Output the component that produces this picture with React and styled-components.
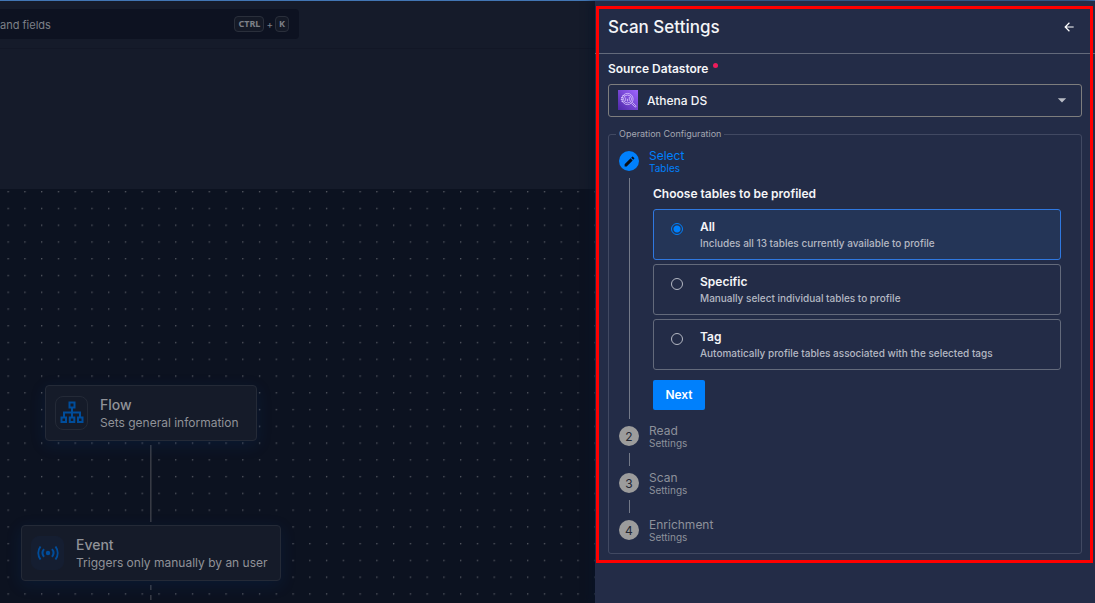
import { useState } from 'react'
import styled, { createGlobalStyle } from 'styled-components'
import { MdArrowBack, MdArrowDropDown, MdEdit } from 'react-icons/md'

const Vars = {
  font: "Inter, 'Noto Sans', sans-serif",
  panel: '#232c47',
  primary: '#0080fc',
  text: '#f4f5f8',
  muted: '#b4b8c3',
  dim: '#8d919b',
  line: '#636a7b',
}

const GlobalStyle = createGlobalStyle`
  * {
    box-sizing: border-box;
  }
  body {
    margin: 0;
    background: #0c1220;
    font-family: ${Vars.font};
  }
  button, input, select {
    font-family: inherit;
  }
`

const Page = styled.div`
  display: grid;
  grid-template-columns: minmax(0, 1fr) 500px;
  min-height: 100vh;
  border-top: 1px solid #4276b4;
`

const Main = styled.main`
  display: flex;
  flex-direction: column;
  min-width: 0;
  overflow: hidden;
  background: #151b2a;
`

const TopBar = styled.header`
  display: flex;
  align-items: center;
  height: 48px;
  padding-bottom: 1px;
  border-bottom: 1px solid #121726;
`

const SearchBox = styled.label`
  display: flex;
  align-items: center;
  width: 299px;
  height: 30px;
  padding-right: 10px;
  border-radius: 0 4px 4px 0;
  background: #0d1221;
  color: #7d8088;
  font-size: 10px;
  input {
    flex: 1;
    min-width: 0;
    padding: 2px 0 0;
    border: 0;
    outline: 0;
    background: transparent;
    color: #7d8088;
    font-size: 11px;
    &::placeholder {
      color: #7d8088;
      opacity: 1;
    }
  }
  kbd {
    padding: 0 3px;
    border: 1px solid #2a2f3b;
    border-radius: 4px;
    background: #141926;
    font: 700 9px/14px 'Noto Sans', sans-serif;
  }
  span {
    padding: 0 2px;
  }
`

const Summary = styled.div`
  height: 140px;
`

const Canvas = styled.section`
  position: relative;
  flex: 1;
  overflow: hidden;
  background: #0c1220;
`

const Backdrop = styled.svg`
  display: block;
  position: absolute;
  inset: 0;
  width: 100%;
  height: 100%;
`

const Node = styled.article`
  display: flex;
  align-items: center;
  gap: 12px;
  position: absolute;
  left: ${(props) => props.$x}px;
  top: ${(props) => props.$y}px;
  width: ${(props) => props.$width}px;
  height: 56px;
  padding: 0 9px;
  border: 1px solid #242a37;
  border-radius: 4px;
  background: #151b29;
  box-shadow: 0 4px 16px rgba(0, 70, 150, 0.16);
  color: #909298;
  h2 {
    margin: 0;
    padding-top: 2px;
    font-size: 14px;
    font-weight: 500;
    line-height: 18px;
  }
  p {
    margin: 0;
    font-size: 12px;
    line-height: 18px;
    white-space: nowrap;
  }
`

const NodeIcon = styled.div`
  display: flex;
  align-items: center;
  justify-content: center;
  flex: none;
  width: 33px;
  height: 34px;
  border: 1px solid ${(props) => (props.$outlined ? '#242a37' : '#151e31')};
  border-radius: 8px;
  background: ${(props) => (props.$outlined ? '#151b29' : '#151e31')};
`

const Panel = styled.aside`
  position: relative;
  z-index: 1;
  background: ${Vars.panel};
  box-shadow: -4px 0 8px rgba(8, 20, 40, 0.7);
`

const Framed = styled.div`
  position: relative;
  &::after {
    content: '';
    position: absolute;
    inset: 5px 2px -9px 1px;
    border: 3px solid #fe0000;
    pointer-events: none;
  }
`

const PanelHeader = styled.header`
  display: flex;
  align-items: center;
  justify-content: space-between;
  height: 53px;
  padding: 0 19px 1px 13px;
  border-bottom: 1px solid ${Vars.line};
  h1 {
    margin: 0;
    color: ${Vars.text};
    font-size: 17px;
    font-weight: 500;
  }
  button {
    display: flex;
    padding: 0;
    border: 0;
    background: none;
    color: #fff;
    cursor: pointer;
  }
`

const Form = styled.form`
  padding: 7px 13px 0;
`

const FieldLabel = styled.label`
  display: flex;
  gap: 5px;
  margin-bottom: 7px;
  color: ${Vars.text};
  font-size: 12px;
  font-weight: 600;
  line-height: 16px;
  &::after {
    content: '';
    width: 5px;
    height: 5px;
    margin-top: 2px;
    border-radius: 50%;
    background: #ed1c5b;
  }
`

const SelectBox = styled.div`
  display: flex;
  align-items: center;
  gap: 9px;
  height: 33px;
  padding: 0 9px 1px;
  border: 1px solid #7d7d7d;
  border-radius: 3px;
  color: #b9bcc5;
  select {
    flex: 1;
    min-width: 0;
    padding: 0;
    border: 0;
    outline: 0;
    appearance: none;
    background: transparent;
    color: ${Vars.text};
    font-size: 12px;
    font-weight: 500;
  }
`

const Group = styled.fieldset`
  min-width: 0;
  margin: 11px 0 0;
  padding: 9px 10px;
  border: 1px solid #414962;
  border-radius: 3px;
  legend {
    margin-left: -3px;
    padding: 0 3px;
    color: #a3a7b2;
    font-size: 9px;
    line-height: 12px;
  }
`

const Steps = styled.ol`
  margin: 0;
  padding: 0;
  list-style: none;
`

const StepItem = styled.li`
  display: flex;
  gap: 10px;
  min-height: ${(props) => (props.$last ? 26 : 47)}px;
`

const Marker = styled.div`
  display: flex;
  flex-direction: column;
  align-items: center;
  gap: 7px;
  flex: none;
  width: 20px;
  padding: ${(props) => (props.$last ? '2px 0 0' : '2px 0 5px')};
  &::after {
    content: '';
    display: ${(props) => (props.$last ? 'none' : 'block')};
    flex: 1;
    width: 1px;
    background: #737988;
  }
`

const Circle = styled.span`
  display: flex;
  align-items: center;
  justify-content: center;
  flex: none;
  width: 20px;
  height: 20px;
  border-radius: 50%;
  background: ${(props) => (props.$active ? Vars.primary : '#9c9c9c')};
  color: ${(props) => (props.$active ? '#0b0f18' : '#232733')};
  font-size: 12px;
`

const StepContent = styled.div`
  flex: 1;
  min-width: 0;
`

const StepTitle = styled.div`
  color: ${(props) => (props.$active ? Vars.primary : Vars.dim)};
  font-size: 12px;
  line-height: 14px;
  small {
    display: block;
    font-size: 10px;
    line-height: 10px;
  }
`

const StepBody = styled.div`
  padding: 13px 10px 14px 4px;
  h2 {
    margin: 0 0 7px;
    color: ${Vars.text};
    font-size: 12px;
    font-weight: 600;
    line-height: 16px;
  }
`

const Options = styled.div`
  display: grid;
  gap: 4px;
  margin-bottom: 10px;
`

const Option = styled.label`
  display: flex;
  align-items: flex-start;
  gap: 17px;
  min-height: 51px;
  padding: 9px 17px 8px;
  border: 1px solid ${(props) => (props.$checked ? '#2f78e0' : Vars.line)};
  border-radius: 3px;
  background: ${(props) => (props.$checked ? '#243557' : 'transparent')};
  color: ${Vars.muted};
  font-size: 10px;
  font-weight: 500;
  line-height: 16px;
  cursor: pointer;
  input {
    flex: none;
    width: 12px;
    height: 12px;
    margin: 4px 0 0;
    border: 1px solid #b4b8c3;
    border-radius: 50%;
    appearance: none;
  }
  input:checked {
    border-color: ${Vars.primary};
    background: radial-gradient(circle, ${Vars.primary} 3px, transparent 4px);
  }
  strong {
    display: block;
    color: ${Vars.text};
    font-size: 12px;
    font-weight: 600;
  }
`

const NextButton = styled.button`
  width: 52px;
  height: 30px;
  padding: 0 0 1px;
  border: 0;
  border-radius: 2px;
  background: ${Vars.primary};
  color: #fff;
  font-size: 12px;
  font-weight: 600;
  cursor: pointer;
`

const options = [
  { id: 'all', title: 'All', text: 'Includes all 13 tables currently available to profile' },
  { id: 'specific', title: 'Specific', text: 'Manually select individual tables to profile' },
  { id: 'tag', title: 'Tag', text: 'Automatically profile tables associated with the selected tags' },
]

const steps = [
  { title: 'Select', sub: 'Tables' },
  { title: 'Read', sub: 'Settings' },
  { title: 'Scan', sub: 'Settings' },
  { title: 'Enrichment', sub: 'Settings' },
]

const FlowIcon = () => (
  <svg width="24" height="24" viewBox="0 0 24 24" fill="none" stroke="#004d9b" strokeWidth="2">
    <path d="M9.500 1.500h5v5h-5zM1.500 16.500h4.500v4.500H1.500zM9.800 16.500h4.500v4.500H9.800zM18 16.500h4.500v4.500H18zM12 6.500v10M4 16.500v-5h16v5" />
  </svg>
)

const EventIcon = () => (
  <svg width="22" height="22" viewBox="0 0 22 22" fill="none" stroke="#004d9b" strokeWidth="2">
    <path d="M3.500 4.500a11 11 0 0 0 0 13M18.500 4.500a11 11 0 0 1 0 13M7 7.200a6 6 0 0 0 0 7.600M15 7.200a6 6 0 0 1 0 7.600" />
    <circle cx="11" cy="11" r="2.200" fill="#004d9b" stroke="none" />
  </svg>
)

const AthenaIcon = () => (
  <svg width="20" height="20" viewBox="0 0 20 20" fill="none" stroke="#d9c6ff" strokeWidth="0.8">
    <defs>
      <linearGradient id="athena" x1="0" y1="1" x2="1" y2="0">
        <stop offset="0" stopColor="#4d27a8" />
        <stop offset="1" stopColor="#a066ff" />
      </linearGradient>
    </defs>
    <path d="M0 0h20v20H0z" fill="url(#athena)" stroke="none" />
    <circle cx="9.500" cy="9" r="5.600" />
    <circle cx="9.500" cy="9" r="4" />
    <path d="M7.700 11V7.500M9.500 11.500V8.800M11.300 10.800V7M3 7.500h2M2.800 9.500h2M3.500 11.500h2M4.500 5.500h2M13.300 13.400l3.500 3.400c.8.600 1.600-.2 1-1l-3.400-3.500" />
  </svg>
)

const FlowCanvas = () => (
  <Canvas>
    <Backdrop aria-hidden="true">
      <defs>
        <pattern id="dots" x="7.500" y="2" width="16.760" height="16.760" patternUnits="userSpaceOnUse">
          <circle cx="0.700" cy="0.700" r="0.700" fill="#62656e" />
        </pattern>
      </defs>
      <rect width="100%" height="100%" fill="url(#dots)" />
      <path d="M150.800 256v77" stroke="#3a3d47" strokeWidth="1.500" />
      <path d="M150.800 396v30" stroke="#3a3d47" strokeWidth="1.500" strokeDasharray="5 5" />
    </Backdrop>
    <Node $x={45} $y={196} $width={212}>
      <NodeIcon $outlined>
        <FlowIcon />
      </NodeIcon>
      <div>
        <h2>Flow</h2>
        <p>Sets general information</p>
      </div>
    </Node>
    <Node $x={21} $y={336} $width={260}>
      <NodeIcon>
        <EventIcon />
      </NodeIcon>
      <div>
        <h2>Event</h2>
        <p>Triggers only manually by an user</p>
      </div>
    </Node>
  </Canvas>
)

const ChooseTables = () => {
  const [checked, setChecked] = useState('all')
  return (
    <StepBody>
      <h2 id="choose">Choose tables to be profiled</h2>
      <Options role="radiogroup" aria-labelledby="choose">
        {options.map(({ id, title, text }) => (
          <Option key={id} $checked={checked === id}>
            <input type="radio" name="tables" checked={checked === id} onChange={() => setChecked(id)} />
            <span>
              <strong>{title}</strong>
              {text}
            </span>
          </Option>
        ))}
      </Options>
      <NextButton type="button">Next</NextButton>
    </StepBody>
  )
}

const ScanSettings = () => (
  <Panel>
    <Framed>
      <PanelHeader>
        <h1>Scan Settings</h1>
        <button type="button" aria-label="Back">
          <MdArrowBack size={14} />
        </button>
      </PanelHeader>
      <Form>
        <FieldLabel htmlFor="datastore">Source Datastore</FieldLabel>
        <SelectBox>
          <AthenaIcon />
          <select id="datastore">
            <option>Athena DS</option>
          </select>
          <MdArrowDropDown size={20} />
        </SelectBox>
        <Group>
          <legend>Operation Configuration</legend>
          <Steps>
            {steps.map(({ title, sub }, index) => {
              const active = index === 0
              const last = index === steps.length - 1
              return (
                <StepItem key={title} $last={last}>
                  <Marker $last={last}>
                    <Circle $active={active}>{active ? <MdEdit size={13} /> : index + 1}</Circle>
                  </Marker>
                  <StepContent>
                    <StepTitle $active={active}>
                      {title}
                      <small>{sub}</small>
                    </StepTitle>
                    {active && <ChooseTables />}
                  </StepContent>
                </StepItem>
              )
            })}
          </Steps>
        </Group>
      </Form>
    </Framed>
  </Panel>
)

const App = () => (
  <>
    <GlobalStyle />
    <Page>
      <Main>
        <TopBar>
          <SearchBox>
            <input type="search" aria-label="Search" placeholder="and fields" />
            <kbd>CTRL</kbd>
            <span>+</span>
            <kbd>K</kbd>
          </SearchBox>
        </TopBar>
        <Summary />
        <FlowCanvas />
      </Main>
      <ScanSettings />
    </Page>
  </>
)

export default App
